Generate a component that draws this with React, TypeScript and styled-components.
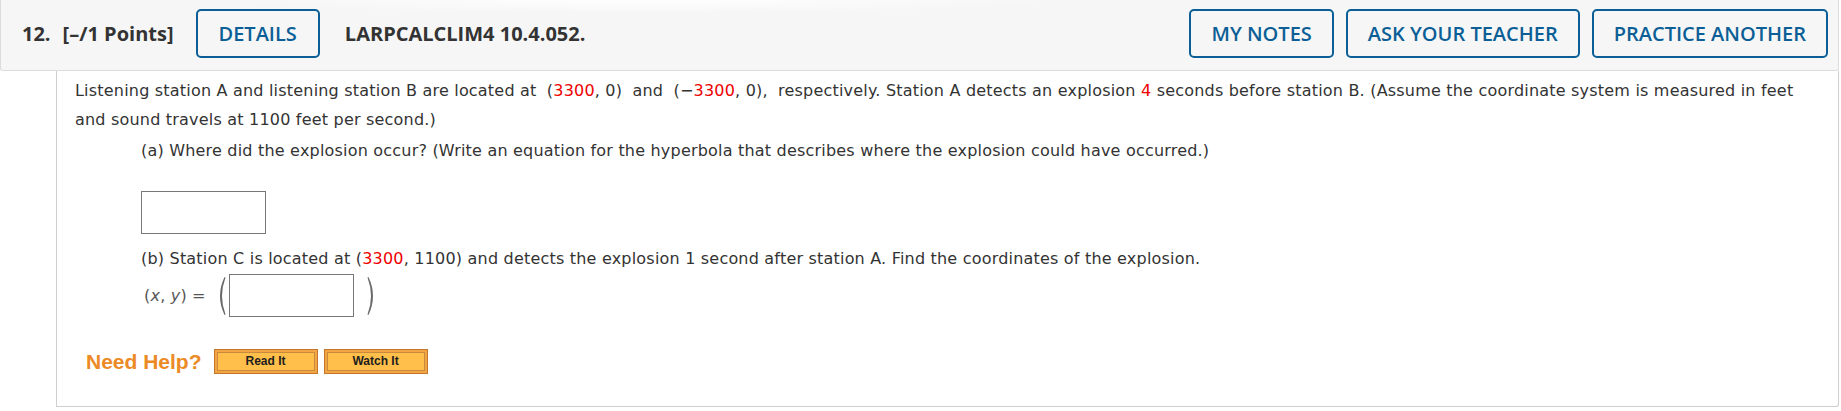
import React from 'react';
import styled, { createGlobalStyle } from 'styled-components';

const GlobalStyle = createGlobalStyle`
  html, body {
    margin: 0;
    padding: 0;
    background: #fff;
  }
  body {
    font-family: "DejaVu Sans", Verdana, sans-serif;
  }
`;

const Page = styled.div`
  width: 1839px;
`;

const Header = styled.div`
  display: flex;
  align-items: center;
  box-sizing: border-box;
  height: 71px;
  padding: 9px 10px 12px 21px;
  border: 1px solid #dcdcdc;
  border-top: none;
  border-radius: 0 0 3px 3px;
  background:
    radial-gradient(ellipse 430px 13px at 640px 0, rgba(255, 255, 255, 0.95), rgba(255, 255, 255, 0)),
    #f6f6f6;
  font-family: "Open Sans", "Liberation Sans", sans-serif;
  font-size: 20px;
  color: #333;
`;

const HeadText = styled.span<{ $gap: number }>`
  font-weight: 700;
  margin-right: ${p => p.$gap}px;
  white-space: nowrap;
`;

const Spacer = styled.div`
  flex: 1;
`;

const OutlineButton = styled.button`
  box-sizing: border-box;
  height: 49px;
  padding: 0 20px;
  border: 2px solid #0b5f96;
  border-radius: 5px;
  background: transparent;
  color: #0b5f96;
  font-family: "Open Sans", "Liberation Sans", sans-serif;
  font-size: 20px;
  font-weight: 600;
  white-space: nowrap;
  & + & {
    margin-left: 12px;
  }
`;

const DetailsButton = styled(OutlineButton)`
  padding: 0 21px;
  margin-right: 25px;
`;

const Body = styled.div`
  margin-left: 56px;
  padding: 5px 18px 32px 18px;
  border: 1px solid #cfcfcf;
  border-top: none;
  border-radius: 0 0 3px 0;
  color: #333;
  font-size: 16px;
  letter-spacing: 0.2px;
`;

const Intro = styled.p`
  margin: 0;
  line-height: 29px;
`;

const Part = styled.div`
  margin-left: 66px;
`;

const PartText = styled.p<{ $top: number }>`
  margin: ${p => p.$top}px 0 0 0;
  line-height: 29px;
`;

const Red = styled.span`
  color: #ee0000;
`;

const Gap = styled.span`
  display: inline-block;
  width: 5px;
`;

const AnswerBox = styled.div<{ $top?: number }>`
  box-sizing: border-box;
  width: 125px;
  height: 43px;
  margin-top: ${p => p.$top ?? 0}px;
  border: 1px solid #777;
  background: #fff;
`;

const CoordRow = styled.div`
  display: flex;
  align-items: center;
  margin-top: 1px;
  padding-left: 3px;
  color: #555;
`;

const CoordLabel = styled.span`
  margin-right: 9px;
  white-space: nowrap;
`;

const Var = styled.i`
  font-style: italic;
`;

const Paren = styled.svg<{ $side: 'l' | 'r' }>`
  width: 11px;
  height: 40px;
  margin: ${p => (p.$side === 'l' ? '0 3px 0 0' : '0 0 0 13px')};
`;

const HelpRow = styled.div`
  display: flex;
  align-items: center;
  margin-top: 32px;
  padding-left: 11px;
  height: 25px;
  letter-spacing: 0;
`;

const HelpLabel = styled.span`
  font-family: "Liberation Sans", Arial, sans-serif;
  font-weight: 700;
  font-size: 21px;
  color: #ec8a26;
  margin-right: 12px;
`;

const HelpButton = styled.button`
  box-sizing: border-box;
  width: 104px;
  height: 25px;
  padding: 2px;
  border: 1px solid #c0772a;
  background: #f5a443;
  cursor: pointer;
  & + & {
    margin-left: 6px;
  }
`;

const HelpInner = styled.span`
  display: block;
  box-sizing: border-box;
  height: 19px;
  line-height: 17px;
  border: 1px solid #c88a3c;
  background: #ffbf4a;
  font-family: "Liberation Sans", Arial, sans-serif;
  font-size: 12px;
  font-weight: 700;
  color: #1d1d1d;
  text-align: center;
`;

function BigParen({ side }: { side: 'l' | 'r' }) {
  const d =
    side === 'l'
      ? 'M9.5,1 Q0.5,20 9.5,39 L10.5,38.5 Q3.5,20 10.5,1.5 Z'
      : 'M1.5,1 Q10.5,20 1.5,39 L0.5,38.5 Q7.5,20 0.5,1.5 Z';
  return (
    <Paren $side={side} viewBox="0 0 11 40">
      <path d={d} fill="#6a6a6a" />
    </Paren>
  );
}

export default function App() {
  return (
    <Page>
      <GlobalStyle />
      <Header>
        <HeadText $gap={12}>12.</HeadText>
        <HeadText $gap={22}>[–/1 Points]</HeadText>
        <DetailsButton>DETAILS</DetailsButton>
        <HeadText $gap={0}>LARPCALCLIM4 10.4.052.</HeadText>
        <Spacer />
        <OutlineButton>MY NOTES</OutlineButton>
        <OutlineButton>ASK YOUR TEACHER</OutlineButton>
        <OutlineButton>PRACTICE ANOTHER</OutlineButton>
      </Header>
      <Body>
        <Intro>
          Listening station A and listening station B are located at <Gap />(<Red>3300</Red>, 0)<Gap /> and{' '}
          <Gap />(−<Red>3300</Red>, 0),<Gap /> respectively. Station A detects an explosion <Red>4</Red> seconds
          before station B. (Assume the coordinate system is measured in feet
          <br />
          and sound travels at 1100 feet per second.)
        </Intro>
        <Part>
          <PartText $top={2}>
            (a) Where did the explosion occur? (Write an equation for the hyperbola that describes where the
            explosion could have occurred.)
          </PartText>
          <AnswerBox $top={26} />
          <PartText $top={10}>
            (b) Station C is located at (<Red>3300</Red>, 1100) and detects the explosion 1 second after station A.
            Find the coordinates of the explosion.
          </PartText>
          <CoordRow>
            <CoordLabel>
              (<Var>x</Var>, <Var>y</Var>) =
            </CoordLabel>
            <BigParen side="l" />
            <AnswerBox />
            <BigParen side="r" />
          </CoordRow>
        </Part>
        <HelpRow>
          <HelpLabel>Need Help?</HelpLabel>
          <HelpButton>
            <HelpInner>Read It</HelpInner>
          </HelpButton>
          <HelpButton>
            <HelpInner>Watch It</HelpInner>
          </HelpButton>
        </HelpRow>
      </Body>
    </Page>
  );
}
